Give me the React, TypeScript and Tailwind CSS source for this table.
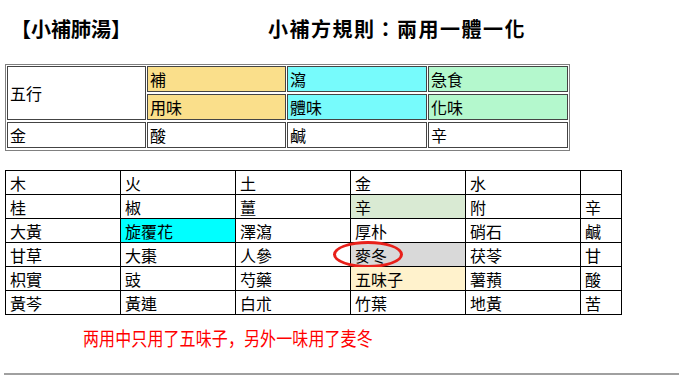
import React from 'react'

const cjk = { fontFamily: '"Noto Sans CJK TC", "Noto Sans CJK SC", sans-serif' }

const grid: { text: string; bg?: string; ring?: boolean }[][] = [
  [{ text: '木' }, { text: '火' }, { text: '土' }, { text: '金' }, { text: '水' }, { text: '' }],
  [{ text: '桂' }, { text: '椒' }, { text: '薑' }, { text: '辛', bg: 'bg-[#d9ead3]' }, { text: '附' }, { text: '辛' }],
  [{ text: '大黃' }, { text: '旋覆花', bg: 'bg-[#00ffff]' }, { text: '澤瀉' }, { text: '厚朴' }, { text: '硝石' }, { text: '鹹' }],
  [{ text: '甘草' }, { text: '大棗' }, { text: '人參' }, { text: '麥冬', bg: 'bg-[#d9d9d9]', ring: true }, { text: '茯苓' }, { text: '甘' }],
  [{ text: '枳實' }, { text: '豉' }, { text: '芍藥' }, { text: '五味子', bg: 'bg-[#fff2cc]' }, { text: '薯蕷' }, { text: '酸' }],
  [{ text: '黃芩' }, { text: '黃連' }, { text: '白朮' }, { text: '竹葉' }, { text: '地黃' }, { text: '苦' }],
]

function Cell({ children, className = '' }: { children?: React.ReactNode; className?: string }) {
  return (
    <div className={`border border-[#444] pl-[2px] flex items-center text-[16px] text-black ${className}`}>
      {children}
    </div>
  )
}

export default function App() {
  return (
    <div className="w-[679px] h-[381px] bg-white relative overflow-hidden" style={cjk}>
      <div className="flex pt-[17px] h-[58px] text-[20px] font-bold text-black leading-[24px]">
        <div className="w-[268px] pl-[11px]">【小補肺湯】</div>
        <div className="tracking-[1.5px]">小補方規則：兩用一體一化</div>
      </div>

      <div className="ml-[5px] mt-[6px] w-[565px] border border-[#808080] p-[1px] pb-[2px]">
        <div className="grid grid-cols-[139px_139px_140px_140px] grid-rows-[26px_26px_26px] gap-x-[1px] gap-y-[2px]">
          <Cell className="row-span-2">五行</Cell>
          <Cell className="bg-[#fadf8b]">補</Cell>
          <Cell className="bg-[#77fbfc]">瀉</Cell>
          <Cell className="bg-[#b4f8cd]">急食</Cell>
          <Cell className="bg-[#fadf8b]">用味</Cell>
          <Cell className="bg-[#77fbfc]">體味</Cell>
          <Cell className="bg-[#b4f8cd]">化味</Cell>
          <Cell>金</Cell>
          <Cell>酸</Cell>
          <Cell>鹹</Cell>
          <Cell>辛</Cell>
        </div>
      </div>

      <div className="ml-[5px] mt-[19px] w-[617px] bg-black p-[1px]">
        <div className="grid grid-cols-[114px_114px_114px_114px_114px_40px] auto-rows-[23px] gap-[1px]">
          {grid.flat().map((c, i) => (
            <div key={i} className={`relative flex items-center pl-[4px] text-[16px] text-black ${c.bg ?? 'bg-white'}`}>
              {c.text}
              {c.ring && (
                <div className="absolute left-[-18px] top-[-2px] w-[70px] h-[27px] rounded-[50%] border-[3px] border-[#e8201a]" />
              )}
            </div>
          ))}
        </div>
      </div>

      <div className="pl-[83px] mt-[9px]">
        <div
          className="inline-block origin-top scale-y-[1.18] text-[16px] leading-[20px] tracking-[0.1px] font-normal text-[#ff0000]"
          style={{ fontFamily: '"Noto Sans CJK SC", sans-serif' }}
        >
          两用中只用了五味子，另外一味用了麦冬
        </div>
      </div>

      <div className="absolute left-[4px] right-0 top-[373px] h-[2px] bg-[#a0a0a0]" />
    </div>
  )
}
